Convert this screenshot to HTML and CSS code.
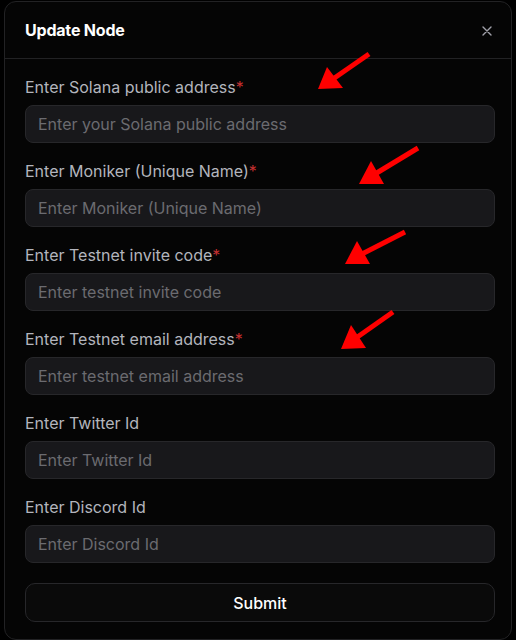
FILE: index.html
```html
<!DOCTYPE html>
<html>
  <head>
    <title>Update Node</title>
    <meta charset="utf-8"/>
    <link rel="stylesheet" href="styles.css">
  </head>
  <body>
    <div class="modal">
      <div class="modal-header">
        <h2 class="modal-title">Update Node</h2>
        <button class="modal-close" aria-label="Close">
          <svg width="10" height="10" viewBox="0 0 10 10">
            <path d="M1 1 L9 9 M9 1 L1 9" stroke="#a1a1aa" stroke-width="1.4" stroke-linecap="round"/>
          </svg>
        </button>
      </div>

      <form class="modal-body">
        <div class="field">
          <label>Enter Solana public address<span class="req">*</span></label>
          <input type="text" placeholder="Enter your Solana public address">
        </div>
        <div class="field">
          <label>Enter Moniker (Unique Name)<span class="req">*</span></label>
          <input type="text" placeholder="Enter Moniker (Unique Name)">
        </div>
        <div class="field">
          <label>Enter Testnet invite code<span class="req">*</span></label>
          <input type="text" placeholder="Enter testnet invite code">
        </div>
        <div class="field">
          <label>Enter Testnet email address<span class="req">*</span></label>
          <input type="text" placeholder="Enter testnet email address">
        </div>
        <div class="field">
          <label>Enter Twitter Id</label>
          <input type="text" placeholder="Enter Twitter Id">
        </div>
        <div class="field">
          <label>Enter Discord Id</label>
          <input type="text" placeholder="Enter Discord Id">
        </div>
        <button type="button" class="submit">Submit</button>
      </form>

      <!-- annotation arrows drawn over the form -->
      <svg class="arrows" width="516" height="640" viewBox="0 0 516 640">
        <g stroke="#ff0000" stroke-width="5" fill="#ff0000">
          <line x1="369" y1="54" x2="333" y2="79"/>
          <polygon stroke="none" points="318,89 327,67 343,88"/>
          <line x1="418" y1="148" x2="375" y2="174"/>
          <polygon stroke="none" points="359,184 371,161 384,184"/>
          <line x1="405" y1="232" x2="362" y2="254"/>
          <polygon stroke="none" points="345,264 357,241 370,264"/>
          <line x1="393" y1="312" x2="356" y2="338"/>
          <polygon stroke="none" points="341,349 351,325 366,348"/>
        </g>
      </svg>
    </div>
  </body>
</html>
```

FILE: styles.css
```css
html, body {
  margin: 0;
  padding: 0;
  background: #000;
  font-family: Inter, "Noto Sans", sans-serif;
}

.modal {
  position: relative;
  margin: 1px 4px 0 4px;
  background: #050505;
  border: 1px solid #222224;
  border-radius: 12px;
  box-sizing: border-box;
  height: 639px;
}

.modal-header {
  display: flex;
  align-items: center;
  justify-content: space-between;
  height: 57px;
  padding: 0 16px 0 20px;
  border-bottom: 1px solid #222224;
  box-sizing: border-box;
}

.modal-title {
  margin: 0;
  font-size: 16px;
  font-weight: 700;
  color: #fff;
  letter-spacing: -0.2px;
}

.modal-close {
  border: none;
  background: transparent;
  padding: 0;
  width: 16px;
  height: 16px;
  display: flex;
  align-items: center;
  justify-content: center;
  margin-top: 2px;
}

.modal-body {
  display: flex;
  flex-direction: column;
  padding: 16px 16px 16px 20px;
}

.field {
  display: flex;
  flex-direction: column;
  gap: 6px;
  margin-bottom: 16px;
}

.field label {
  font-size: 16px;
  line-height: 24px;
  color: #b3b5bd;
}

.field .req {
  color: #c53030;
}

.field input {
  height: 38px;
  box-sizing: border-box;
  background: #18181b;
  border: 1px solid #27272a;
  border-radius: 8px;
  padding: 0 12px;
  font-family: inherit;
  font-size: 16px;
  color: #fff;
  outline: none;
}

.field input::placeholder {
  color: #6b6b70;
}

.submit {
  margin-top: 4px;
  height: 39px;
  background: #0a0a0a;
  border: 1px solid #27272a;
  border-radius: 10px;
  color: #fff;
  font-family: inherit;
  font-size: 16px;
  font-weight: 500;
}

.arrows {
  position: absolute;
  left: -5px;
  top: -2px;
  pointer-events: none;
}
```
